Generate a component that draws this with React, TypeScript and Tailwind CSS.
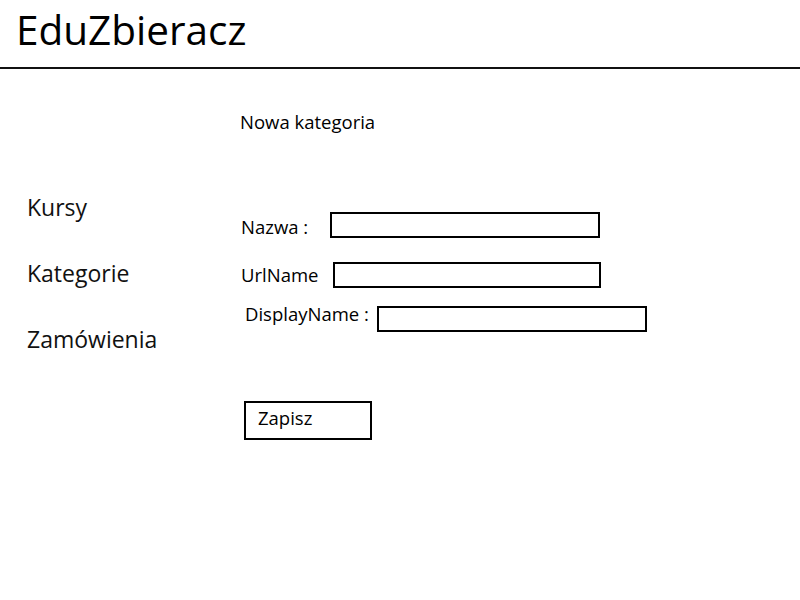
const font = { fontFamily: '"Open Sans", "Noto Sans", sans-serif' };

function Field({
  label,
  labelClass,
  inputClass,
  rowClass,
}: {
  label: string;
  labelClass: string;
  inputClass: string;
  rowClass: string;
}) {
  return (
    <div className={`flex items-start ${rowClass}`}>
      <span className={`shrink-0 whitespace-nowrap text-[18.5px] leading-[24px] text-black ${labelClass}`}>
        {label}
      </span>
      <input className={`shrink-0 border-2 border-black bg-white outline-none ${inputClass}`} />
    </div>
  );
}

export default function App() {
  return (
    <div className="w-[800px] h-[600px] bg-white text-black overflow-hidden" style={font}>
      <header className="h-[69px] border-b-2 border-[#111] pl-[16px] pt-[6px]">
        <h1 className="text-[40.5px] leading-[48px] font-normal">EduZbieracz</h1>
      </header>

      <div className="flex">
        <nav className="w-[240px] shrink-0 pl-[27px] pt-[123px] flex flex-col gap-[36px] text-[23px] leading-[30px] text-[#111] font-medium">
          <a>Kursy</a>
          <a>Kategorie</a>
          <a>Zamówienia</a>
        </nav>

        <main className="flex-1 pt-[41px]">
          <h2 className="text-[18.5px] leading-[24px]">Nowa kategoria</h2>

          <Field
            label="Nazwa :"
            rowClass="mt-[78px] pl-[1px]"
            labelClass="w-[89px] mt-[3px]"
            inputClass="w-[270px] h-[26px]"
          />
          <Field
            label="UrlName"
            rowClass="mt-[23px] pl-[1px]"
            labelClass="w-[92px] mt-[1px]"
            inputClass="w-[268px] h-[26px]"
          />
          <Field
            label="DisplayName :"
            rowClass="mt-[14px] pl-[5px]"
            labelClass="w-[132px]"
            inputClass="w-[270px] h-[26px] mt-[4px]"
          />

          <button className="mt-[69px] ml-[4px] w-[128px] h-[39px] border-2 border-black bg-white text-left pl-[12px] pt-[3px] flex items-start text-[18.5px] leading-[24px]">
            Zapisz
          </button>
        </main>
      </div>
    </div>
  );
}
